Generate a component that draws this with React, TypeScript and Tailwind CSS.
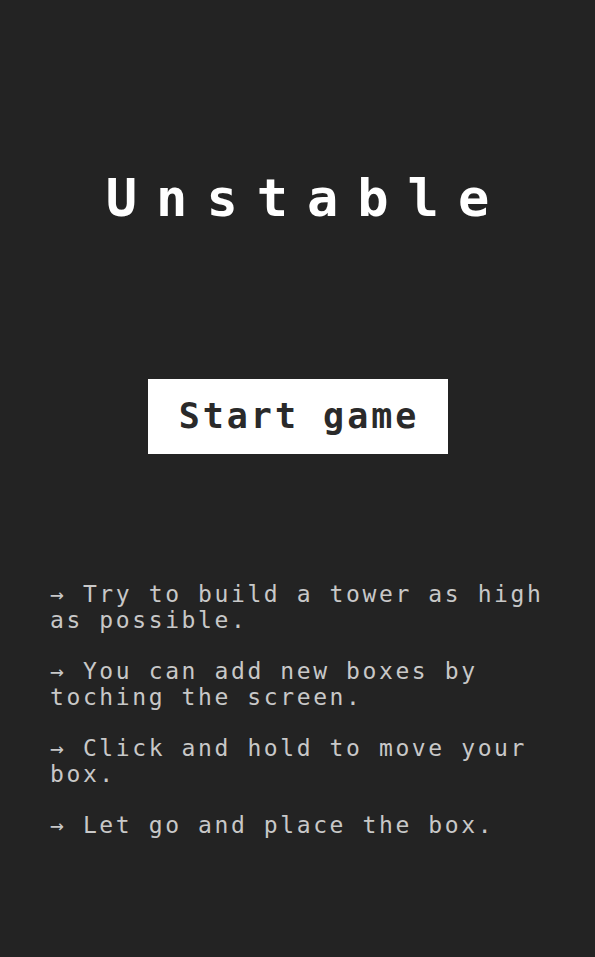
import React from 'react';

const tips = [
  'Try to build a tower as high as possible.',
  'You can add new boxes by toching the screen.',
  'Click and hold to move your box.',
  'Let go and place the box.',
];

export default function App() {
  return (
    <div
      className="min-h-[957px] w-full bg-[#232323] flex flex-col"
      style={{ fontFamily: '"DejaVu Sans Mono", "Liberation Mono", monospace' }}
    >
      {/* Title */}
      <h1 className="mt-[172px] text-center text-white font-bold text-[52px] leading-[52px] tracking-[19px] pl-[19px]">
        Unstable
      </h1>

      {/* Start button */}
      <div className="mt-[155px] flex justify-center">
        <button className="w-[300px] h-[75px] bg-white text-[#2a2a2a] font-bold text-[35px] tracking-[3px] pl-[3px] flex items-center justify-center">
          Start game
        </button>
      </div>

      {/* Instructions */}
      <div className="mt-[127px] pl-[50px] pr-[40px] flex flex-col gap-[25px] text-[#c8c8c8] text-[23px] leading-[26px] tracking-[2.6px]">
        {tips.map((t) => (
          <p key={t}>→ {t}</p>
        ))}
      </div>
    </div>
  );
}
